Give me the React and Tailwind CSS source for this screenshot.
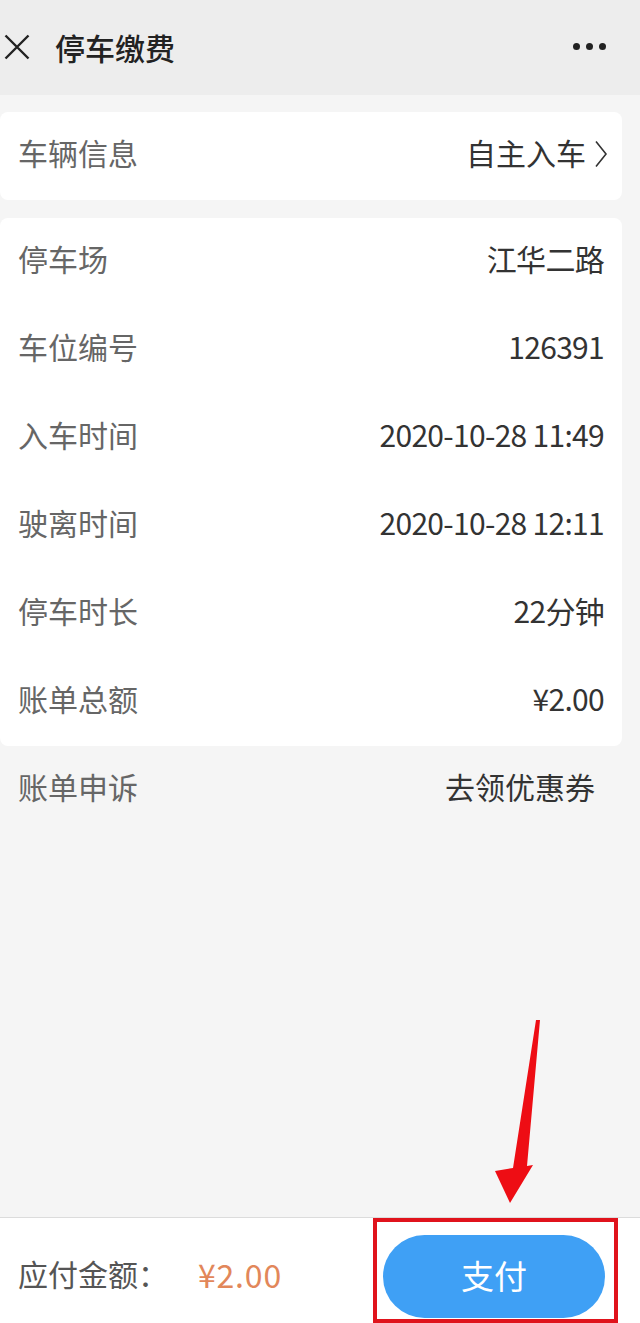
import React from 'react';

const rows = [
  { label: '停车场', value: '江华二路' },
  { label: '车位编号', value: '126391' },
  { label: '入车时间', value: '2020-10-28 11:49' },
  { label: '驶离时间', value: '2020-10-28 12:11' },
  { label: '停车时长', value: '22分钟' },
  { label: '账单总额', value: '¥2.00' },
];

const font = { fontFamily: '"Noto Sans CJK SC", "Noto Sans", sans-serif' };

const App = () => {
  return (
    <div className="relative flex flex-col h-[1323px] w-[640px] bg-[#f5f5f5] overflow-hidden" style={font}>
      {/* top bar */}
      <div className="flex items-center h-[95px] bg-[#ededed] shrink-0 pb-[2px]">
        <svg width="26" height="26" viewBox="0 0 26 26" className="ml-[4px]">
          <path d="M1.5 1.5 L24.5 24.5 M24.5 1.5 L1.5 24.5" stroke="#222" strokeWidth="2.4" fill="none" />
        </svg>
        <span className="ml-[25px] text-[30px] font-medium text-[#222] leading-none">停车缴费</span>
        <div className="ml-auto mr-[34px] flex gap-[6px]">
          <span className="w-[7px] h-[7px] rounded-full bg-[#222]" />
          <span className="w-[7px] h-[7px] rounded-full bg-[#222]" />
          <span className="w-[7px] h-[7px] rounded-full bg-[#222]" />
        </div>
      </div>

      {/* content */}
      <div className="flex-1 pt-[17px]">
        <div className="w-[622px] h-[88px] bg-white rounded-[8px] flex items-center justify-between pl-[18px] pr-[14px] pb-[8px]">
          <span className="text-[30px] text-[#666]">车辆信息</span>
          <div className="flex items-center gap-[8px]">
            <span className="text-[30px] text-[#333]">自主入车</span>
            <svg width="14" height="28" viewBox="0 0 14 28" className="mt-[4px]">
              <path d="M2 1.5 L12 14 L2 26.5" stroke="#333" strokeWidth="1.6" fill="none" />
            </svg>
          </div>
        </div>

        <div className="mt-[18px] w-[622px] bg-white rounded-[8px]">
          {rows.map((r) => (
            <div key={r.label} className="h-[88px] flex items-center justify-between pl-[18px] pr-[18px] pb-[8px]">
              <span className="text-[30px] text-[#666]">{r.label}</span>
              <span className="text-[30px] text-[#333] tracking-[-0.7px]">{r.value}</span>
            </div>
          ))}
        </div>

        <div className="w-[622px] h-[88px] flex items-center justify-between pl-[18px] pr-[27px] pb-[8px]">
          <span className="text-[30px] text-[#666]">账单申诉</span>
          <span className="text-[30px] text-[#333]">去领优惠券</span>
        </div>
      </div>

      {/* bottom pay bar */}
      <div className="h-[106px] shrink-0 bg-white border-t border-[#dcdcdc] flex items-center">
        <span className="ml-[18px] text-[30px] text-[#555] mt-[6px]">应付金额：</span>
        <span className="ml-[30px] text-[32px] text-[#e2875a] mt-[6px] tracking-[0.8px]">¥2.00</span>
        <button className="ml-auto mr-[35px] w-[222px] h-[83px] rounded-full bg-[#3fa0f5] text-white text-[33px] mt-[12px] pb-[2px]">
          支付
        </button>
      </div>

      {/* red annotation */}
      <div className="absolute left-[373px] top-[1218px] w-[245px] h-[105px] border-[4px] border-[#e0131c]" />
      <svg className="absolute left-0 top-0 pointer-events-none" width="640" height="1323">
        <polygon
          points="536,1020 540,1020 527,1166 533,1165 510,1203 495,1171 513,1168"
          fill="#ee0d14"
        />
      </svg>
    </div>
  );
};

export default App;
